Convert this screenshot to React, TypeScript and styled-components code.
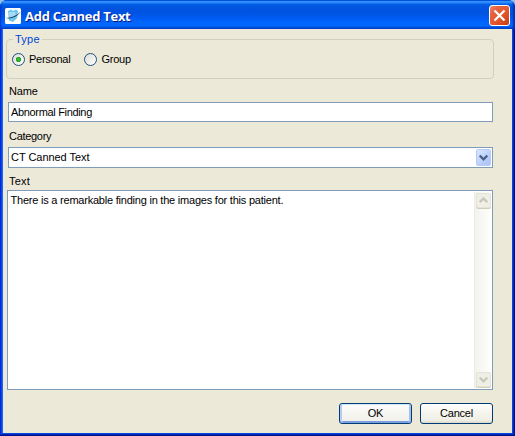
import React, { useState } from "react";
import styled, { createGlobalStyle, css } from "styled-components";

const GlobalStyle = createGlobalStyle`
  *, *::before, *::after { box-sizing: border-box; }
  body {
    margin: 0;
    background: #8fc0ea;
    color: #000;
    font: 11px/13px "Liberation Sans", Arial, sans-serif;
  }
  button, input, textarea { font: inherit; color: inherit; }
`;

const Window = styled.div`
  display: flex;
  flex-direction: column;
  width: 515px;
  height: 436px;
  border-radius: 7px 7px 0 0;
  overflow: hidden;
  background: #0831d9;
`;

const TitleBar = styled.header`
  display: flex;
  align-items: center;
  flex: none;
  height: 29px;
  padding: 2px 5px 0 5px;
  background: linear-gradient(
    180deg,
    #0058e0 0px, #0058e0 1px,
    #3a93ff 1px, #2584fb 3px,
    #0561e8 4px, #0054e0 7px,
    #0053e0 13px, #005bf3 18px,
    #0065fd 22px, #0068ff 26px,
    #0052e2 27px, #0040c8 29px
  );
  box-shadow: inset 2px 0 2px -1px #0036c4, inset -3px 0 2px -1px #0030b4;
`;

const Title = styled.h1`
  flex: 1;
  margin: 0 0 0 4px;
  color: #fff;
  font: bold 13px/18px "Open Sans", "Noto Sans", sans-serif;
  letter-spacing: -0.28px;
  text-shadow: 1px 1px 0 #0a1883;
  white-space: nowrap;
`;

const CloseButton = styled.button`
  display: flex;
  width: 21px;
  height: 21px;
  padding: 0;
  border: 1px solid #fff;
  border-radius: 3px;
  background: linear-gradient(135deg, #ee8b70 0%, #e4623e 25%, #e2552c 60%, #c43c14 100%);
`;

const Frame = styled.div`
  flex: 1;
  display: flex;
  padding: 0 3px 3px;
  background: #ece9d8;
  box-shadow:
    inset 0 -1px 0 #00138c,
    inset -1px 0 0 #00138c,
    inset 1px 0 0 #0028dc,
    inset 0 -2px 0 #0024b4,
    inset -2px 0 0 #0024b4,
    inset 2px 0 0 #0848e4,
    inset 0 -3px 0 #0848dc,
    inset -3px 0 0 #0848e0,
    inset 3px 0 0 #1668f0;
`;

const Form = styled.form`
  flex: 1;
  display: flex;
  flex-direction: column;
  padding: 4px 19px 9px 3px;
`;

const Group = styled.fieldset`
  display: flex;
  gap: 14px;
  height: 46px;
  min-width: 0;
  margin: 0 -1px 0 0;
  padding: 7px 0 0 5px;
  border: 1px solid #d0d0bf;
  border-radius: 4px;
`;

const Legend = styled.legend`
  height: 13px;
  margin-left: 1px;
  padding: 0 2px;
  color: #0046d5;
  letter-spacing: 0.25px;
`;

const RadioLabel = styled.label`
  display: flex;
  align-items: center;
  gap: 4px;
  height: 13px;
  letter-spacing: -0.25px;
`;

const Radio = styled.input.attrs({ type: "radio", name: "kind" })`
  appearance: none;
  flex: none;
  width: 13px;
  height: 13px;
  margin: 0;
  border: 1px solid #1c5180;
  border-radius: 50%;
  background: linear-gradient(135deg, #dcdcd7, #fff);
  &:checked {
    background: radial-gradient(circle at 50% 50%, #42c93f 0, #21a121 2.2px, transparent 3px),
      linear-gradient(135deg, #dcdcd7, #fff);
  }
`;

const Label = styled.label<{ $top: number; $tracking: number }>`
  height: 13px;
  margin: ${(p) => p.$top}px 0 0;
  padding-left: 3px;
  letter-spacing: ${(p) => p.$tracking}px;
`;

const field = css`
  border: 1px solid #7f9db9;
  background: #fff;
`;

const TextInput = styled.input`
  ${field}
  height: 20px;
  margin: 4px 0 0 2px;
  padding: 0 2px;
  border-radius: 0;
  outline: none;
  letter-spacing: -0.33px;
`;

const Select = styled.div`
  ${field}
  display: flex;
  align-items: center;
  height: 21px;
  margin: 4px 0 0 2px;
  padding: 0 1px 0 2px;
  letter-spacing: -0.04px;
`;

const SelectValue = styled.span`
  flex: 1;
`;

const DropButton = styled.button`
  display: flex;
  align-items: center;
  justify-content: center;
  width: 15px;
  height: 17px;
  padding: 0;
  border: 1px solid #b9cbf5;
  border-radius: 2px;
  background: linear-gradient(135deg, #dbe6ff, #b5cbfb 70%, #adc3f5);
`;

const TextPanel = styled.div`
  ${field}
  display: flex;
  height: 200px;
  margin: 2px 0 0 1px;
  padding: 1px;
`;

const TextArea = styled.textarea`
  flex: 1;
  min-width: 0;
  padding: 2px 1.5px;
  border: 0;
  outline: none;
  resize: none;
  overflow: hidden;
  background: transparent;
  letter-spacing: -0.22px;
`;

const ScrollTrack = styled.div`
  display: flex;
  flex-direction: column;
  justify-content: space-between;
  width: 17px;
  padding: 1px;
  border-left: 1px solid #eeede5;
  background: linear-gradient(90deg, #f3f3ee, #fefefb);
`;

const ScrollButton = styled.button`
  display: flex;
  align-items: center;
  justify-content: center;
  width: 15px;
  height: 15px;
  padding: 0;
  border: 1px solid #e4e3d6;
  border-radius: 2px;
  background: #f0efe7;
  box-shadow: 0 1px 0 #d2cfb9;
`;

const Actions = styled.div`
  display: flex;
  justify-content: flex-end;
  gap: 8px;
  margin-top: 13px;
`;

const ActionButton = styled.button<{ $primary?: boolean }>`
  width: 73px;
  height: 21px;
  padding: 0;
  border: 1px solid #003c74;
  border-radius: 3px;
  letter-spacing: -0.2px;
  background: linear-gradient(180deg, #fff 0%, #f5f4ed 45%, #f0efe6 85%, #dcd6ca 100%);
  ${(p) =>
    p.$primary &&
    css`
      background: linear-gradient(180deg, #fcfcfb, #f0efe8);
      box-shadow: inset 0 1px 0 #cee7ff, inset 2px 0 0 #b5cdf5, inset -2px 0 0 #a5bff0, inset 0 -2px 0 #7c9de0;
    `}
`;

const AppIcon = () => (
  <svg width="16" height="16" viewBox="0 0 16 16" aria-hidden="true">
    <rect width="16" height="16" rx="1.5" fill="#fff" />
    <path d="M3 3 6 1.5 8 3l3-1.5L13 3l-.8 7L8 14 4 12.5Z" fill="#6cc6ee" />
    <path d="M4 4h6l1 3-4 3-3-2Z" fill="#a4dcf6" />
    <path d="M0 9.8C5 10.4 11 8.2 16 3.6 12 9 6 11.8 0 9.8Z" fill="#17384f" />
  </svg>
);

const Chevron = ({ color, up = false }: { color: string; up?: boolean }) => (
  <svg width="9" height="7" viewBox="0 0 9 7" aria-hidden="true">
    <path d={up ? "M.7 5.3 4.5 1.5 8.3 5.3" : "M.7 1.5 4.5 5.3 8.3 1.5"} fill="none" stroke={color} strokeWidth="2.3" />
  </svg>
);

export default function App() {
  const [kind, setKind] = useState("Personal");
  const [name, setName] = useState("Abnormal Finding");
  const [text, setText] = useState("There is a remarkable finding in the images for this patient.");

  return (
    <>
      <GlobalStyle />
      <Window>
        <TitleBar>
          <AppIcon />
          <Title>Add Canned Text</Title>
          <CloseButton aria-label="Close">
            <svg width="19" height="19" viewBox="0 0 19 19" aria-hidden="true">
              <path d="m4.5 4.5 10 10m0-10-10 10" stroke="#fff" strokeWidth="2.2" />
            </svg>
          </CloseButton>
        </TitleBar>
        <Frame>
          <Form onSubmit={(e) => e.preventDefault()}>
            <Group>
              <Legend>Type</Legend>
              {["Personal", "Group"].map((option) => (
                <RadioLabel key={option}>
                  <Radio checked={kind === option} onChange={() => setKind(option)} />
                  {option}
                </RadioLabel>
              ))}
            </Group>
            <Label $top={6} $tracking={-0.15} htmlFor="name">Name</Label>
            <TextInput id="name" value={name} onChange={(e) => setName(e.target.value)} />
            <Label $top={8} $tracking={-0.3}>Category</Label>
            <Select>
              <SelectValue>CT Canned Text</SelectValue>
              <DropButton type="button" aria-label="Open list">
                <Chevron color="#4d6185" />
              </DropButton>
            </Select>
            <Label $top={7} $tracking={0.25} htmlFor="text">Text</Label>
            <TextPanel>
              <TextArea id="text" value={text} onChange={(e) => setText(e.target.value)} />
              <ScrollTrack>
                <ScrollButton type="button" aria-label="Scroll up">
                  <Chevron color="#c9c7ba" up />
                </ScrollButton>
                <ScrollButton type="button" aria-label="Scroll down">
                  <Chevron color="#c9c7ba" />
                </ScrollButton>
              </ScrollTrack>
            </TextPanel>
            <Actions>
              <ActionButton $primary>OK</ActionButton>
              <ActionButton type="button">Cancel</ActionButton>
            </Actions>
          </Form>
        </Frame>
      </Window>
    </>
  );
}
